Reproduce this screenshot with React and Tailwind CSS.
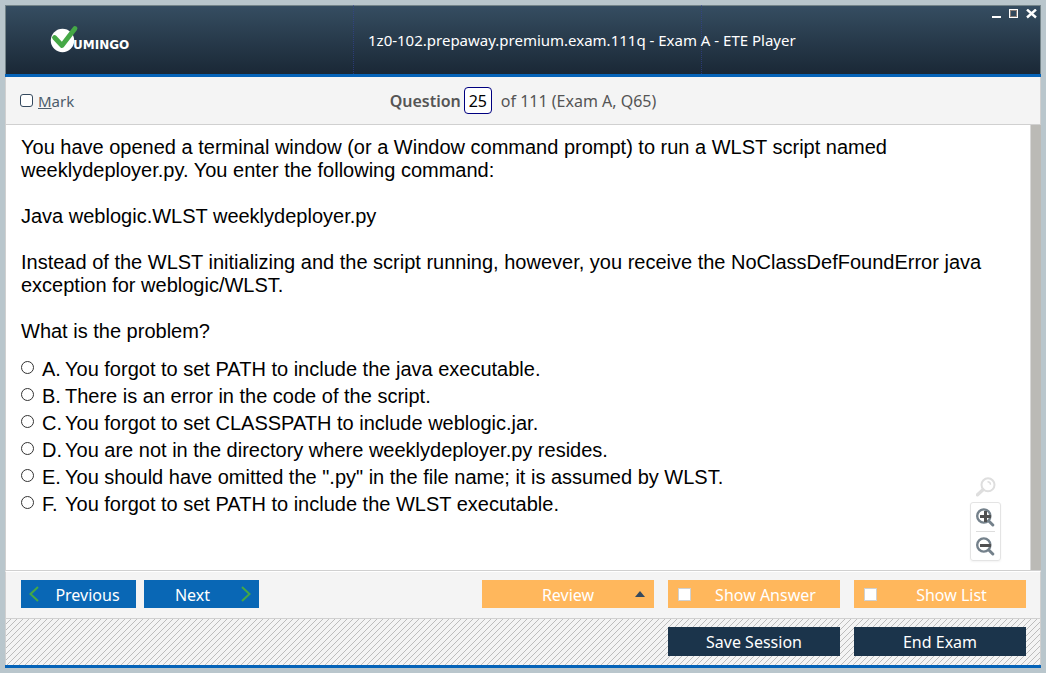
const options = [
  ["A", "You forgot to set PATH to include the java executable."],
  ["B", "There is an error in the code of the script."],
  ["C", "You forgot to set CLASSPATH to include weblogic.jar."],
  ["D", "You are not in the directory where weeklydeployer.py resides."],
  ["E", 'You should have omitted the ".py" in the file name; it is assumed by WLST.'],
  ["F", "You forgot to set PATH to include the WLST executable."],
];

const uiFont = "font-['Noto_Sans',sans-serif]";

function Logo() {
  return (
    <div className="flex items-start pt-[20px] pl-[45px]">
      <svg width="84" height="28" viewBox="0 0 84 28" role="img" aria-label="Vumingo">
        <circle cx="12.5" cy="15.5" r="11.7" fill="#fff" />
        <path d="M4.5 12.5 L12 20.5 L25 3.5" fill="none" stroke="#45a846" strokeWidth="4.8" strokeLinecap="round" strokeLinejoin="round" />
        <text x="23" y="24" fontFamily="DejaVu Sans" fontWeight="bold" fontSize="12" fill="#fff">UMINGO</text>
      </svg>
    </div>
  );
}

function WindowButtons() {
  return (
    <div className="flex items-start justify-end gap-2 pt-1 pr-1">
      <button aria-label="Minimize">
        <svg width="9" height="10" viewBox="0 0 9 10"><path d="M0 8h9" stroke="#fff" strokeWidth="2" /></svg>
      </button>
      <button aria-label="Maximize">
        <svg width="9" height="10" viewBox="0 0 9 10">
          <rect x="0.5" y="0.5" width="8" height="8" fill="none" stroke="#fff" />
          <rect x="1.5" y="1.5" width="6" height="6" fill="none" stroke="#8b7f79" />
        </svg>
      </button>
      <button aria-label="Close">
        <svg width="11" height="10" viewBox="0 0 11 10"><path d="M1 0.5l9 8M10 0.5l-9 8" stroke="#fff" strokeWidth="2.4" /></svg>
      </button>
    </div>
  );
}

function Lens({ minus }) {
  return (
    <svg width="20" height="20" viewBox="0 0 20 20" aria-hidden="true">
      <circle cx="7.8" cy="9" r="6.6" fill="none" stroke="#74818b" strokeWidth="2.4" />
      <path d="M12.8 14l4 4" stroke="#74818b" strokeWidth="3" strokeLinecap="round" />
      <path d={minus ? "M4 9.5h11" : "M4 9.5h11M9.5 4v11"} stroke="#505050" strokeWidth="3" />
    </svg>
  );
}

function CheckButton({ label }) {
  return (
    <label className="flex h-7 w-43 items-center bg-[#ffb75c] pl-[10px] text-white">
      <input type="checkbox" className="size-[13px] appearance-none border border-[#d0d0d0] bg-white" />
      <span className="flex-1 pt-[2px] text-center">{label}</span>
    </label>
  );
}

export default function App() {
  return (
    <div className={`flex min-h-screen flex-col bg-[#b9c6cc] p-[5px] text-[16px] ${uiFont}`}>
      <div className="flex flex-1 flex-col">
        <header className="grid h-[72px] grid-cols-[minmax(0,348fr)_minmax(0,349fr)_minmax(0,339fr)] border-b-[3px] border-[#0563b8] bg-linear-to-b from-[#364e62] to-[#1a2836] shadow-[inset_0_1px_0_#748489,inset_1px_0_0_#748489,inset_-1px_0_0_#748489]">
          <Logo />
          <h1 className="flex items-center border-x border-dotted border-[#34429c]/60 pt-[2px] pl-[14px] text-[15px] font-normal whitespace-nowrap text-white">
            1z0-102.prepaway.premium.exam.111q - Exam A - ETE Player
          </h1>
          <WindowButtons />
        </header>

        <div className="grid h-[48px] grid-cols-[1fr_auto_1fr] items-center border border-t-0 border-[#d0d0d0] bg-[#f4f4f4] px-[14px] text-[#555]">
          <label className="flex items-center gap-[5px] text-[15px] text-[#4b5c6b]">
            <input type="checkbox" className="size-[13px] appearance-none rounded-[3px] border border-[#34495e] bg-white" />
            <span className="pt-[2px]"><u>M</u>ark</span>
          </label>
          <div className="flex items-center">
            <label htmlFor="question" className="font-semibold">Question</label>
            <input id="question" defaultValue="25" className="mr-[9px] ml-[3px] h-[27px] w-7 rounded-[4px] border border-[#000080] bg-white text-center text-black" />
            <span>of 111 (Exam A, Q65)</span>
          </div>
        </div>

        <main className="relative flex flex-1 border-b border-l border-[#d0d0d0] bg-white font-['Liberation_Sans',sans-serif] text-[20px] leading-[23px] text-black">
          <div className="flex-1 pt-[11px] pr-10 pl-[15px]">
            <div className="space-y-[23px]">
              <p>You have opened a terminal window (or a Window command prompt) to run a WLST script named weeklydeployer.py. You enter the following command:</p>
              <p>Java weblogic.WLST weeklydeployer.py</p>
              <p>Instead of the WLST initializing and the script running, however, you receive the NoClassDefFoundError java exception for weblogic/WLST.</p>
              <p>What is the problem?</p>
            </div>
            <div className="mt-[13px]">
              {options.map(([letter, text]) => (
                <label key={letter} className="flex h-[27px] items-center">
                  <input type="radio" name="answer" className="mr-2 mb-1 size-[13px] appearance-none rounded-full border border-[#333] bg-white" />
                  <span className="w-[23px]">{letter}.</span>
                  <span>{text}</span>
                </label>
              ))}
            </div>
          </div>
          <div className="absolute right-10 bottom-[9px] flex w-[31px] flex-col items-center">
            <svg width="20" height="20" viewBox="0 0 20 20" className="mb-[5px]" aria-hidden="true">
              <circle cx="12" cy="7.8" r="6.5" fill="none" stroke="#dedede" strokeWidth="2" />
              <path d="M7 12.8l-5.5 5" stroke="#dedede" strokeWidth="3.4" strokeLinecap="round" />
              <path d="M11.5 4.8q3 0 3 3" fill="none" stroke="#dedede" strokeWidth="1.4" />
            </svg>
            <div className="flex w-[31px] flex-col items-center rounded-[3px] border border-[#e4e4e4] shadow-xs">
              <button aria-label="Zoom in" className="flex h-7 items-center"><Lens /></button>
              <div className="h-px w-[19px] bg-[#ddd]" />
              <button aria-label="Zoom out" className="flex h-7 items-center"><Lens minus /></button>
            </div>
          </div>
          <div className="w-[11px] border-l border-[#d8d8d8] bg-[#bbbab6]" />
        </main>

        <div className="flex h-[48px] items-start border border-[#d0d0d0] border-t-white bg-[#f4f4f4] pt-2 pr-[14px] pl-[15px]">
          <div className="flex gap-2 text-white">
            <button className="flex h-7 w-[115px] items-center bg-[#0967b5] pl-2">
              <svg width="10" height="16" viewBox="0 0 10 16" aria-hidden="true"><path d="M9 1L1.5 8L9 15" fill="none" stroke="#45a846" strokeWidth="2" /></svg>
              <span className="flex-1 pt-[2px] text-center">Previous</span>
            </button>
            <button className="flex h-7 w-[115px] items-center bg-[#0967b5] pr-2">
              <span className="flex-1 pt-[2px] text-center">Next</span>
              <svg width="10" height="16" viewBox="0 0 10 16" aria-hidden="true"><path d="M1 1L8.5 8L1 15" fill="none" stroke="#45a846" strokeWidth="2" /></svg>
            </button>
          </div>
          <div className="ml-auto flex gap-[14px]">
            <button className="flex h-7 w-43 items-center bg-[#ffb75c] px-[9px] text-white">
              <span className="flex-1 pt-[2px] pl-[10px] text-center">Review</span>
              <svg width="10" height="6" viewBox="0 0 10 6" aria-hidden="true"><path d="M5 0l5 6H0z" fill="#34495e" /></svg>
            </button>
            <CheckButton label="Show Answer" />
            <CheckButton label="Show List" />
          </div>
        </div>

        <footer className="flex h-[49px] items-start justify-end gap-[14px] border-b-[3px] border-[#0563b8] bg-[#f4f4f4] bg-[linear-gradient(135deg,transparent_43%,#bdbdbd_46%,#bdbdbd_54%,transparent_57%)] bg-size-[6px_6px] px-[15px] pt-2 text-white shadow-[inset_1px_0_0_#d0d0d0,inset_-1px_0_0_#d0d0d0]">
          <button className="h-[29px] w-43 bg-[#1b344b]">Save Session</button>
          <button className="h-[29px] w-43 bg-[#1b344b]">End Exam</button>
        </footer>
      </div>
    </div>
  );
}
